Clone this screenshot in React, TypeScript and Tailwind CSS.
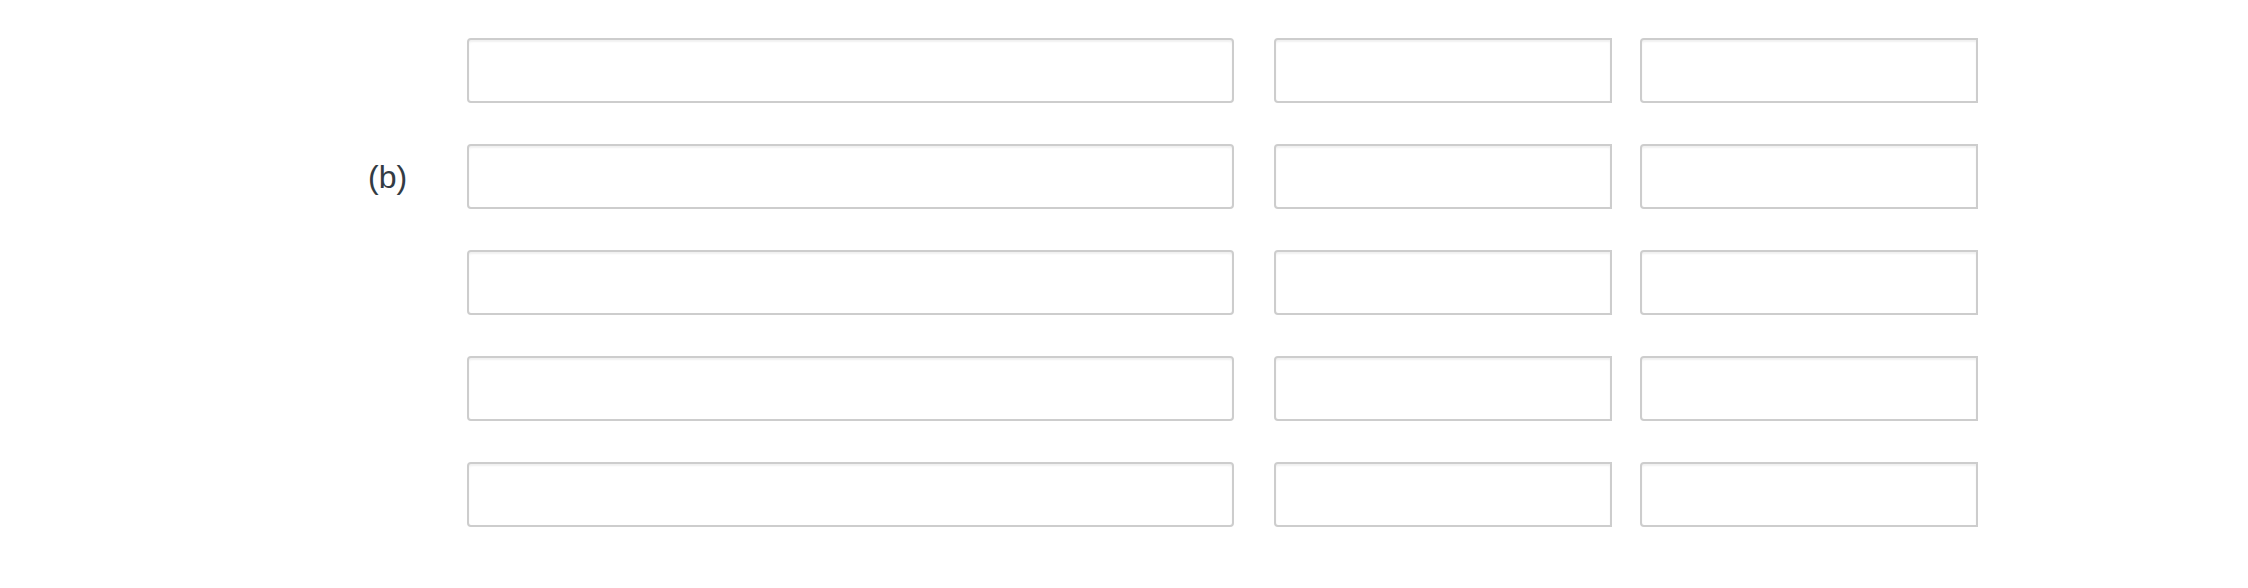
import React from 'react';

const rows = [0, 1, 2, 3, 4];

function Field({ className = '' }: { className?: string }) {
  return (
    <input
      type="text"
      className={`h-[65px] border-2 border-[#cdcdcd] bg-white shadow-[inset_0_2px_2px_rgba(0,0,0,0.06)] outline-none ${className}`}
    />
  );
}

export default function App() {
  return (
    <div className="h-[588px] overflow-hidden bg-white pt-[38px] font-['Liberation_Sans',Arial,sans-serif]">
      <div className="flex flex-col gap-[41px]">
        {rows.map((i) => (
          <div key={i} className="flex items-center pl-[368px]">
            <div className="w-[99px] text-[32px] leading-none text-[#333b44]">
              {i === 1 ? '(b)' : ''}
            </div>
            <Field className="w-[767px] rounded-[4px]" />
            <Field className="ml-[40px] w-[338px] rounded-l-[4px]" />
            <Field className="ml-[28px] w-[338px] rounded-l-[4px]" />
          </div>
        ))}
      </div>
    </div>
  );
}
